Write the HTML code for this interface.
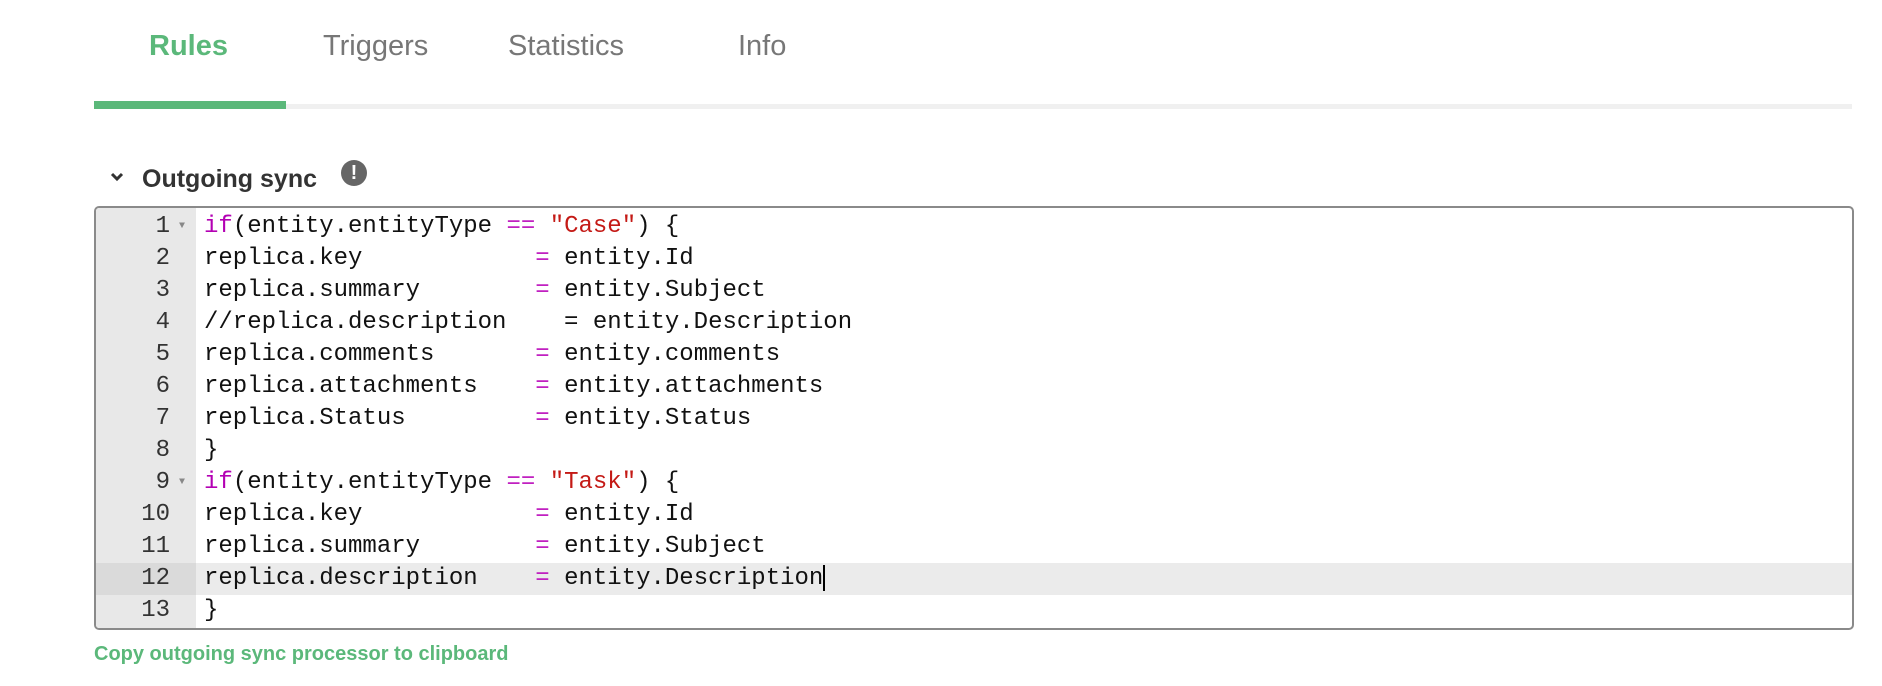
<!DOCTYPE html>
<html><head><style>
body{margin:0;width:1882px;height:686px;background:#fff;font-family:"Liberation Sans",Arial,sans-serif;position:relative;overflow:hidden}
.tab{position:absolute;top:30px;font-size:29px;color:#777}
.tab.a{color:#5bb87a;font-weight:bold}
.ul{position:absolute;left:94px;top:104px;width:1758px;height:5px;background:#f0f0f0}
.ulg{position:absolute;left:94px;top:101px;width:192px;height:8px;background:#5bb87a}
.hd{position:absolute;left:142px;top:165px;font-size:25px;font-weight:bold;color:#333}
.chev{position:absolute;left:110px;top:170px}
.info{position:absolute;left:341px;top:160px;width:26px;height:26px;border-radius:50%;background:#666;color:#fff;font-weight:bold;font-size:20px;text-align:center;line-height:26px}
.ed{position:absolute;left:94px;top:206px;width:1756px;height:420px;border:2px solid #8a8a8a;border-radius:5px;overflow:hidden;background:#fff}
.gut{position:absolute;left:0;top:0;width:100px;height:100%;background:#e8e8e8}
.lines{position:absolute;left:0;top:3px;width:100%}
.ln{height:32px;line-height:32px;position:relative;font-family:"Liberation Mono",monospace;font-size:24px;white-space:pre}
.ln .n{position:absolute;left:0;width:74px;text-align:right;color:#333}
.ln .c{position:absolute;left:108px;color:#111}
.ln.hl{background:#ebebeb}
.ln.hl .n{background:#dadada;width:74px;padding-right:26px;left:0}
.f{position:absolute;left:83px;top:0;font-size:10px;color:#888}
.k{color:#b300b3}.s{color:#c41a16}.cm{color:#2e8a1a}.o{color:#c020c0}
.cur{display:inline-block;width:2px;height:26px;background:#000;vertical-align:middle}
.copy{position:absolute;left:94px;top:643px;font-size:20px;font-weight:bold;color:#5bb87a}
</style></head><body>
<div class="tab a" style="left:149px">Rules</div>
<div class="tab" style="left:323px">Triggers</div>
<div class="tab" style="left:508px">Statistics</div>
<div class="tab" style="left:738px">Info</div>
<div class="ul"></div><div class="ulg"></div>
<svg class="chev" width="14" height="14" viewBox="0 0 14 14"><path d="M2 4 L7 9 L12 4" stroke="#333" stroke-width="3" fill="none"/></svg>
<div class="hd">Outgoing sync</div>
<div class="info">!</div>
<div class="ed"><div class="gut"></div><div class="lines">
<div class="ln"><span class="n">1</span><span class="f">▼</span><span class="c"><span class="k">if</span>(entity.entityType <span class="o">==</span> <span class="s">"Case"</span>) {</span></div>
<div class="ln"><span class="n">2</span><span class="c">replica.key            <span class="o">=</span> entity.Id</span></div>
<div class="ln"><span class="n">3</span><span class="c">replica.summary        <span class="o">=</span> entity.Subject</span></div>
<div class="ln"><span class="n">4</span><span class="c cm">//replica.description    = entity.Description</span></div>
<div class="ln"><span class="n">5</span><span class="c">replica.comments       <span class="o">=</span> entity.comments</span></div>
<div class="ln"><span class="n">6</span><span class="c">replica.attachments    <span class="o">=</span> entity.attachments</span></div>
<div class="ln"><span class="n">7</span><span class="c">replica.Status         <span class="o">=</span> entity.Status</span></div>
<div class="ln"><span class="n">8</span><span class="c">}</span></div>
<div class="ln"><span class="n">9</span><span class="f">▼</span><span class="c"><span class="k">if</span>(entity.entityType <span class="o">==</span> <span class="s">"Task"</span>) {</span></div>
<div class="ln"><span class="n">10</span><span class="c">replica.key            <span class="o">=</span> entity.Id</span></div>
<div class="ln"><span class="n">11</span><span class="c">replica.summary        <span class="o">=</span> entity.Subject</span></div>
<div class="ln hl"><span class="n">12</span><span class="c">replica.description    <span class="o">=</span> entity.Description<span class="cur"></span></span></div>
<div class="ln"><span class="n">13</span><span class="c">}</span></div>
</div></div>
<div class="copy">Copy outgoing sync processor to clipboard</div>
</body></html>
